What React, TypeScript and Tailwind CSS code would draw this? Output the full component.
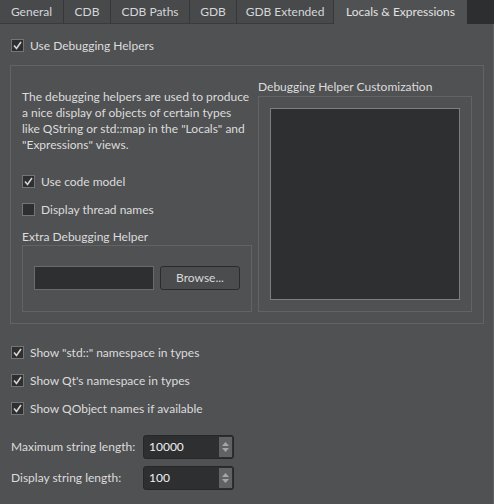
import React from "react";

function CheckBox({ checked }: { checked: boolean }) {
  return (
    <span className="w-[13px] h-[13px] shrink-0 bg-[#2e2f31] border border-[#747577] flex items-center justify-center">
      {checked && (
        <svg width="11" height="11" viewBox="0 0 11 11">
          <polyline points="2,5.5 4.5,8.5 9,2" fill="none" stroke="#d6d6d6" strokeWidth="1.6" />
        </svg>
      )}
    </span>
  );
}

function CheckRow({ checked, label }: { checked: boolean; label: string }) {
  return (
    <div className="h-[13px] flex items-center gap-[6px]">
      <CheckBox checked={checked} />
      <span className="leading-[13px] whitespace-nowrap">{label}</span>
    </div>
  );
}

function SpinBox({ value }: { value: string }) {
  return (
    <div className="w-[91px] h-[24px] bg-[#2e2f31] border border-[#262729] rounded-[3px] flex">
      <span className="flex-1 pl-[5px] flex items-center text-[#f0f0f0]">{value}</span>
      <div className="w-[13px] my-[1px] mr-[1px] bg-[#616264] flex flex-col items-center justify-center gap-[2px]">
        <svg width="7" height="4" viewBox="0 0 7 4">
          <polygon points="0,4 3.5,0 7,4" fill="#a5a6a8" />
        </svg>
        <svg width="7" height="4" viewBox="0 0 7 4">
          <polygon points="0,0 3.5,4 7,0" fill="#a5a6a8" />
        </svg>
      </div>
    </div>
  );
}

const tabs = [
  { name: "General", w: "w-[64px]" },
  { name: "CDB", w: "w-[47px]" },
  { name: "CDB Paths", w: "w-[79px]" },
  { name: "GDB", w: "w-[47px]" },
  { name: "GDB Extended", w: "w-[97px]" },
];

export default function App() {
  return (
    <div
      className="w-[494px] h-[504px] bg-[#2d2e30] flex flex-col text-[12px] text-[#dcdcdc] overflow-hidden"
      style={{ fontFamily: "Lato, 'Noto Sans', sans-serif" }}
    >
      {/* tab bar */}
      <div className="h-[24px] flex shrink-0">
        {tabs.map((t) => (
          <div
            key={t.name}
            className={`${t.w} h-[24px] bg-[#48494b] border-r border-[#36373a] border-b border-b-[#3a3b3d] flex items-center justify-center text-[#d4d7da]`}
          >
            {t.name}
          </div>
        ))}
        <div className="w-[133px] h-[24px] bg-[#505153] flex items-center justify-center text-[#e2e2e2]">
          Locals &amp; Expressions
        </div>
      </div>

      {/* page */}
      <div className="flex-1 bg-[#505153] border-r border-[#5f6062] pt-[15px] pl-[10px]">
        <div className="pl-px">
          <CheckRow checked label="Use Debugging Helpers" />
        </div>

        <div className="mt-[13px] w-[474px] h-[259px] border border-[#626365] flex gap-[6px] pl-[11px]">
          {/* left column */}
          <div className="w-[230px] flex flex-col">
            <p className="mt-[23px] leading-[16px]">
              The debugging helpers are used to produce a nice display of objects of certain types like QString or
              std::map in the "Locals" and "Expressions" views.
            </p>
            <div className="mt-[22px]">
              <CheckRow checked label="Use code model" />
            </div>
            <div className="mt-[15px]">
              <CheckRow checked={false} label="Display thread names" />
            </div>
            <div className="mt-[13px] h-[16px] leading-[16px]">Extra Debugging Helper</div>
            <div className="h-[67px] border border-[#626365] pl-[11px] pt-[20px] flex gap-[6px]">
              <div className="w-[120px] h-[24px] bg-[#2e2f31] border border-[#6a6b6d]" />
              <div className="w-[80px] h-[24px] bg-[#4b4c4e] border border-[#2a2b2d] rounded-[3px] flex items-center justify-center text-[#d8dadc]">
                Browse...
              </div>
            </div>
          </div>

          {/* right column */}
          <div className="w-[214px] flex flex-col">
            <div className="mt-[13px] h-[17px] leading-[16px] whitespace-nowrap">Debugging Helper Customization</div>
            <div className="h-[216px] border border-[#626365] p-[11px]">
              <div className="w-full h-full bg-[#2e2f31] border border-[#7d7e80]" />
            </div>
          </div>
        </div>

        <div className="pl-px mt-[22px] flex flex-col gap-[15px]">
          <CheckRow checked label={'Show "std::" namespace in types'} />
          <CheckRow checked label="Show Qt's namespace in types" />
          <CheckRow checked label="Show QObject names if available" />
        </div>

        <div className="pl-px mt-[20px] flex flex-col gap-[7px]">
          <div className="flex items-center">
            <span className="w-[132px]">Maximum string length:</span>
            <SpinBox value="10000" />
          </div>
          <div className="flex items-center">
            <span className="w-[132px]">Display string length:</span>
            <SpinBox value="100" />
          </div>
        </div>
      </div>
    </div>
  );
}
